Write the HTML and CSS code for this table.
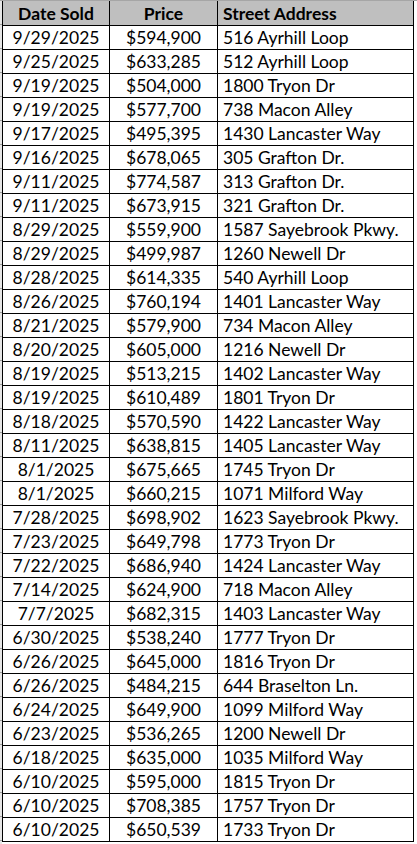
FILE: index.html
```html
<!DOCTYPE html>
<html>
<head>
<meta charset="utf-8">
<link rel="stylesheet" href="styles.css">
</head>
<body>
<div class="page">
  <div class="rowhead"></div>
  <div class="sheet">
    <div class="row head"><div class="c date">Date Sold</div><div class="c price">Price</div><div class="c addr">Street Address</div></div>
    <div class="row"><div class="c date">9/29/2025</div><div class="c price">$594,900</div><div class="c addr">516 Ayrhill Loop</div></div>
    <div class="row"><div class="c date">9/25/2025</div><div class="c price">$633,285</div><div class="c addr">512 Ayrhill Loop</div></div>
    <div class="row"><div class="c date">9/19/2025</div><div class="c price">$504,000</div><div class="c addr">1800 Tryon Dr</div></div>
    <div class="row"><div class="c date">9/19/2025</div><div class="c price">$577,700</div><div class="c addr">738 Macon Alley</div></div>
    <div class="row"><div class="c date">9/17/2025</div><div class="c price">$495,395</div><div class="c addr">1430 Lancaster Way</div></div>
    <div class="row"><div class="c date">9/16/2025</div><div class="c price">$678,065</div><div class="c addr">305 Grafton Dr.</div></div>
    <div class="row"><div class="c date">9/11/2025</div><div class="c price">$774,587</div><div class="c addr">313 Grafton Dr.</div></div>
    <div class="row"><div class="c date">9/11/2025</div><div class="c price">$673,915</div><div class="c addr">321 Grafton Dr.</div></div>
    <div class="row"><div class="c date">8/29/2025</div><div class="c price">$559,900</div><div class="c addr">1587 Sayebrook Pkwy.</div></div>
    <div class="row"><div class="c date">8/29/2025</div><div class="c price">$499,987</div><div class="c addr">1260 Newell Dr</div></div>
    <div class="row"><div class="c date">8/28/2025</div><div class="c price">$614,335</div><div class="c addr">540 Ayrhill Loop</div></div>
    <div class="row"><div class="c date">8/26/2025</div><div class="c price">$760,194</div><div class="c addr">1401 Lancaster Way</div></div>
    <div class="row"><div class="c date">8/21/2025</div><div class="c price">$579,900</div><div class="c addr">734 Macon Alley</div></div>
    <div class="row"><div class="c date">8/20/2025</div><div class="c price">$605,000</div><div class="c addr">1216 Newell Dr</div></div>
    <div class="row"><div class="c date">8/19/2025</div><div class="c price">$513,215</div><div class="c addr">1402 Lancaster Way</div></div>
    <div class="row"><div class="c date">8/19/2025</div><div class="c price">$610,489</div><div class="c addr">1801 Tryon Dr</div></div>
    <div class="row"><div class="c date">8/18/2025</div><div class="c price">$570,590</div><div class="c addr">1422 Lancaster Way</div></div>
    <div class="row"><div class="c date">8/11/2025</div><div class="c price">$638,815</div><div class="c addr">1405 Lancaster Way</div></div>
    <div class="row"><div class="c date">8/1/2025</div><div class="c price">$675,665</div><div class="c addr">1745 Tryon Dr</div></div>
    <div class="row"><div class="c date">8/1/2025</div><div class="c price">$660,215</div><div class="c addr">1071 Milford Way</div></div>
    <div class="row"><div class="c date">7/28/2025</div><div class="c price">$698,902</div><div class="c addr">1623 Sayebrook Pkwy.</div></div>
    <div class="row"><div class="c date">7/23/2025</div><div class="c price">$649,798</div><div class="c addr">1773 Tryon Dr</div></div>
    <div class="row"><div class="c date">7/22/2025</div><div class="c price">$686,940</div><div class="c addr">1424 Lancaster Way</div></div>
    <div class="row"><div class="c date">7/14/2025</div><div class="c price">$624,900</div><div class="c addr">718 Macon Alley</div></div>
    <div class="row"><div class="c date">7/7/2025</div><div class="c price">$682,315</div><div class="c addr">1403 Lancaster Way</div></div>
    <div class="row"><div class="c date">6/30/2025</div><div class="c price">$538,240</div><div class="c addr">1777 Tryon Dr</div></div>
    <div class="row"><div class="c date">6/26/2025</div><div class="c price">$645,000</div><div class="c addr">1816 Tryon Dr</div></div>
    <div class="row"><div class="c date">6/26/2025</div><div class="c price">$484,215</div><div class="c addr">644 Braselton Ln.</div></div>
    <div class="row"><div class="c date">6/24/2025</div><div class="c price">$649,900</div><div class="c addr">1099 Milford Way</div></div>
    <div class="row"><div class="c date">6/23/2025</div><div class="c price">$536,265</div><div class="c addr">1200 Newell Dr</div></div>
    <div class="row"><div class="c date">6/18/2025</div><div class="c price">$635,000</div><div class="c addr">1035 Milford Way</div></div>
    <div class="row"><div class="c date">6/10/2025</div><div class="c price">$595,000</div><div class="c addr">1815 Tryon Dr</div></div>
    <div class="row"><div class="c date">6/10/2025</div><div class="c price">$708,385</div><div class="c addr">1757 Tryon Dr</div></div>
    <div class="row"><div class="c date">6/10/2025</div><div class="c price">$650,539</div><div class="c addr">1733 Tryon Dr</div></div>
  </div>
</div>
</body>
</html>
```
FILE: styles.css
```css
html, body {
  margin: 0;
  padding: 0;
  background: #ffffff;
}
.page {
  display: flex;
  align-items: flex-start;
  width: 417px;
  height: 844px;
  overflow: hidden;
  border-top: 1px solid #a6a6a6;
  box-sizing: border-box;
}
.rowhead {
  width: 2px;
  height: 844px;
  flex: none;
  background: repeating-linear-gradient(to bottom, #e6e6e6 0, #e6e6e6 23px, #9e9e9e 23px, #9e9e9e 24px);
}
.sheet {
  display: flex;
  flex-direction: column;
  gap: 1px;
  background: #000;
  padding: 0 1px 1px 1px;
  font-family: Lato, "Liberation Sans", sans-serif;
  font-size: 17.5px;
  color: #000;
}
.row {
  display: grid;
  grid-template-columns: 106px 107px 195px;
  column-gap: 1px;
  height: 23px;
}
.row.head {
  height: 24px;
  font-weight: bold;
}
.c {
  background: #fff;
  line-height: 24px;
  white-space: nowrap;
  overflow: hidden;
}
.head .c {
  background: #bfbfbf;
  line-height: 25px;
}
.date, .price {
  text-align: center;
}
.addr {
  text-align: left;
  padding-left: 5px;
}
```
